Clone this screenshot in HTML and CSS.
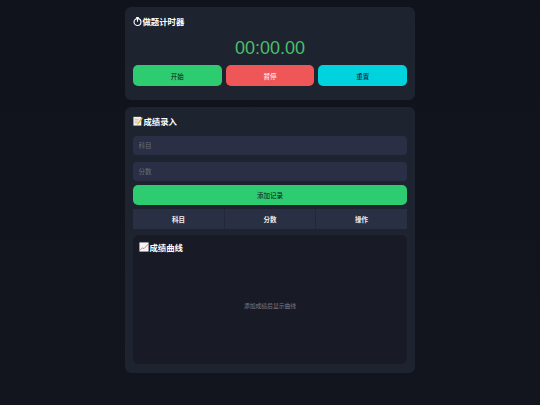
FILE: index.html
```html
<!DOCTYPE html>
<html lang="zh-CN">
<head>
    <meta charset="UTF-8">
    <title>做题计时器</title>
    <link rel="stylesheet" href="styles.css">
</head>
<body>
    <div class="container">
        <section class="card card-timer">
            <h2 class="card-title">
                <svg class="icon icon-watch" viewBox="0 0 12 12"><circle cx="6" cy="6.7" r="4.6" fill="none" stroke="#fff" stroke-width="1.5"/><path d="M6 0.6V6.4M4.2 0.8H7.8" fill="none" stroke="#fff" stroke-width="1.4"/></svg>做题计时器
            </h2>
            <div class="timer">00:00.00</div>
            <div class="timer-btns">
                <button class="btn btn-green">开始</button>
                <button class="btn btn-red">暂停</button>
                <button class="btn btn-cyan">重置</button>
            </div>
        </section>

        <section class="card">
            <h2 class="card-title">
                <svg class="icon" viewBox="0 0 12 12"><rect x="0.5" y="1" width="9.5" height="10.5" fill="#f4f1e6"/><path d="M2 4H7M2 6H6M2 8H5" stroke="#9a9a9a" stroke-width="0.6"/><path d="M4.5 9.5L10.5 1.5L11.8 2.6L5.8 10.5Z" fill="#f5b430"/></svg>成绩录入
            </h2>
            <input class="field" type="text" placeholder="科目">
            <input class="field" type="text" placeholder="分数">
            <button class="btn btn-green btn-add">添加记录</button>
            <table class="records">
                <thead>
                    <tr><th>科目</th><th>分数</th><th>操作</th></tr>
                </thead>
            </table>
            <div class="chart-box">
                <h2 class="card-title">
                    <svg class="icon" viewBox="0 0 12 12"><rect x="0.5" y="0.5" width="11" height="11" fill="#f6f6f6"/><path d="M1 10L4 7L6 8L11 2.5" fill="none" stroke="#e2504c" stroke-width="0.9"/></svg>成绩曲线
                </h2>
                <div class="chart-empty">添加成绩后显示曲线</div>
            </div>
        </section>
    </div>
</body>
</html>
```

FILE: styles.css
```css
* {
    box-sizing: border-box;
}

body {
    margin: 0;
    min-height: 405px;
    background: linear-gradient(180deg, #10131c, #12151e);
    font-family: "Liberation Sans", "Noto Sans CJK SC", sans-serif;
    color: #fff;
}

.container {
    width: 290px;
    margin: 0 auto;
    padding-top: 7px;
    display: flex;
    flex-direction: column;
    gap: 7px;
}

.card {
    background: #1e2330;
    border-radius: 6px;
    padding: 8px 8px 9px;
    display: flex;
    flex-direction: column;
}

.card-timer {
    padding-bottom: 14px;
}

.card-title {
    margin: 0;
    height: 12px;
    display: flex;
    align-items: center;
    gap: 0.5px;
    font-size: 8.4px;
    font-weight: 700;
    color: #fff;
}

.icon {
    width: 10px;
    height: 10px;
    flex: none;
}

.icon-watch {
    width: 9px;
    height: 9px;
}

.timer {
    margin-top: 9px;
    height: 24px;
    line-height: 24px;
    text-align: center;
    font-size: 18px;
    color: #4abf6b;
}

.timer-btns {
    margin-top: 5px;
    display: grid;
    grid-template-columns: repeat(3, 1fr);
    gap: 4px;
}

.btn {
    height: 21px;
    padding: 0;
    border: none;
    border-radius: 5px;
    font-family: inherit;
    font-size: 6.5px;
    cursor: pointer;
}

.btn-green {
    background: #2ecc71;
    color: #10131c;
}

.btn-red {
    background: #ef5658;
    color: #fff;
}

.btn-cyan {
    background: #00d2de;
    color: #10131c;
}

.field {
    display: block;
    width: 100%;
    height: 19px;
    margin-top: 7px;
    padding: 0 5.5px;
    border: none;
    border-radius: 4px;
    background: #2a2f45;
    font-family: inherit;
    font-size: 6.5px;
    color: #fff;
}

.card-title + .field {
    margin-top: 9px;
}

.field::placeholder {
    color: #6b6f7c;
}

.btn-add {
    margin-top: 4px;
    width: 100%;
    height: 20px;
}

.records {
    margin-top: 4px;
    width: 100%;
    border-collapse: collapse;
    table-layout: fixed;
}

.records th {
    height: 20px;
    padding: 0;
    background: #293044;
    border-left: 1px solid #232839;
    font-size: 6.5px;
    font-weight: 700;
    color: #f0f0f0;
}

.records th:first-child {
    border-left: none;
}

.chart-box {
    margin-top: 6px;
    height: 129px;
    padding: 5.5px 6px 6px;
    border-radius: 6px;
    background: #181a25;
    display: flex;
    flex-direction: column;
}

.chart-empty {
    flex: 1;
    display: flex;
    align-items: center;
    justify-content: center;
    font-size: 5.8px;
    color: #7b7d85;
}
```
